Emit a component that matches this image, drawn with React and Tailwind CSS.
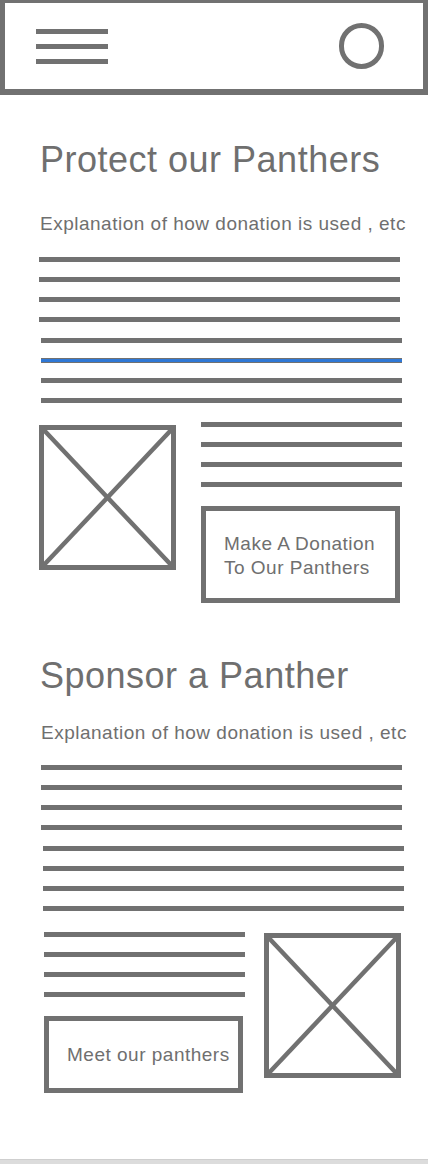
import React from 'react';

const font = { fontFamily: '"Liberation Sans", Arial, sans-serif' };

const Bar = ({ className = '' }) => <div className={`h-[5px] bg-[#717171] ${className}`} />;

const ImageBox = () => (
  <svg width="137" height="145" viewBox="0 0 137 145" className="shrink-0 block">
    <rect x="2.5" y="2.5" width="132" height="140" fill="none" stroke="#717171" strokeWidth="5" />
    <line x1="2.5" y1="2.5" x2="134.5" y2="142.5" stroke="#717171" strokeWidth="4.5" />
    <line x1="134.5" y1="2.5" x2="2.5" y2="142.5" stroke="#717171" strokeWidth="4.5" />
  </svg>
);

const Title = ({ children, className = '' }) => (
  <h1 className={`text-[36px] leading-[36px] tracking-[0.5px] text-[#6f6f6f] ${className}`}>{children}</h1>
);

const Sub = ({ children, className = '' }) => (
  <p className={`text-[19px] leading-[19px] tracking-[0.5px] text-[#6f6f6f] whitespace-nowrap ${className}`}>{children}</p>
);

export default function App() {
  return (
    <div className="w-[428px] h-[1164px] bg-white flex flex-col" style={font}>
      <header className="h-[95px] shrink-0 border-x-[5px] border-t-[3px] border-b-[6px] border-[#717171] flex items-center justify-between pl-[31px] pr-[39px]">
        <div className="flex flex-col gap-[10px] w-[72px]">
          <Bar />
          <Bar />
          <Bar />
        </div>
        <div className="w-[45px] h-[46px] rounded-full border-[5px] border-[#717171]" />
      </header>

      <section className="flex flex-col">
        <Title className="mt-[47px] ml-[40px]">Protect our Panthers</Title>
        <Sub className="mt-[36px] ml-[40px]">Explanation of how donation is used , etc</Sub>
        <div className="mt-[24px] flex flex-col gap-[15px] ml-[39px] w-[361px]">
          <Bar />
          <Bar />
          <Bar />
          <Bar />
        </div>
        <div className="mt-[16px] flex flex-col gap-[15px] ml-[41px] w-[361px]">
          <Bar />
          <div className="h-[5px] bg-[#717171] flex items-center">
            <div className="h-[3px] w-full bg-[#2f78d6]" />
          </div>
          <Bar />
          <Bar />
        </div>
        <div className="mt-[19px] flex items-start pl-[39px]">
          <div className="mt-[3px]">
            <ImageBox />
          </div>
          <div className="ml-[25px] w-[201px] flex flex-col">
            <div className="flex flex-col gap-[15px]">
              <Bar />
              <Bar />
              <Bar />
              <Bar />
            </div>
            <div className="mt-[19px] w-[199px] h-[97px] border-[5px] border-[#717171] pl-[18px] pt-[21px] text-[19px] leading-[24px] tracking-[0.5px] text-[#6f6f6f]">
              Make A Donation<br />To Our Panthers
            </div>
          </div>
        </div>
      </section>

      <section className="flex flex-col">
        <Title className="mt-[55px] ml-[40px]">Sponsor a Panther</Title>
        <Sub className="mt-[29px] ml-[41px]">Explanation of how donation is used , etc</Sub>
        <div className="mt-[23px] flex flex-col gap-[15px] ml-[41px] w-[361px]">
          <Bar />
          <Bar />
          <Bar />
          <Bar />
        </div>
        <div className="mt-[16px] flex flex-col gap-[15px] ml-[43px] w-[361px]">
          <Bar />
          <Bar />
          <Bar />
          <Bar />
        </div>
        <div className="mt-[21px] flex items-start pl-[44px]">
          <div className="w-[201px] flex flex-col">
            <div className="flex flex-col gap-[15px]">
              <Bar />
              <Bar />
              <Bar />
              <Bar />
            </div>
            <div className="mt-[19px] w-[199px] h-[77px] border-[5px] border-[#717171] pl-[18px] flex items-center text-[19px] leading-[19px] tracking-[0.5px] text-[#6f6f6f]">
              Meet our panthers
            </div>
          </div>
          <div className="ml-[19px] mt-[1px]">
            <ImageBox />
          </div>
        </div>
      </section>

      <div className="mt-auto h-[5px] bg-[#dcdcdc] border-t border-[#cfcfcf]" />
    </div>
  );
}
